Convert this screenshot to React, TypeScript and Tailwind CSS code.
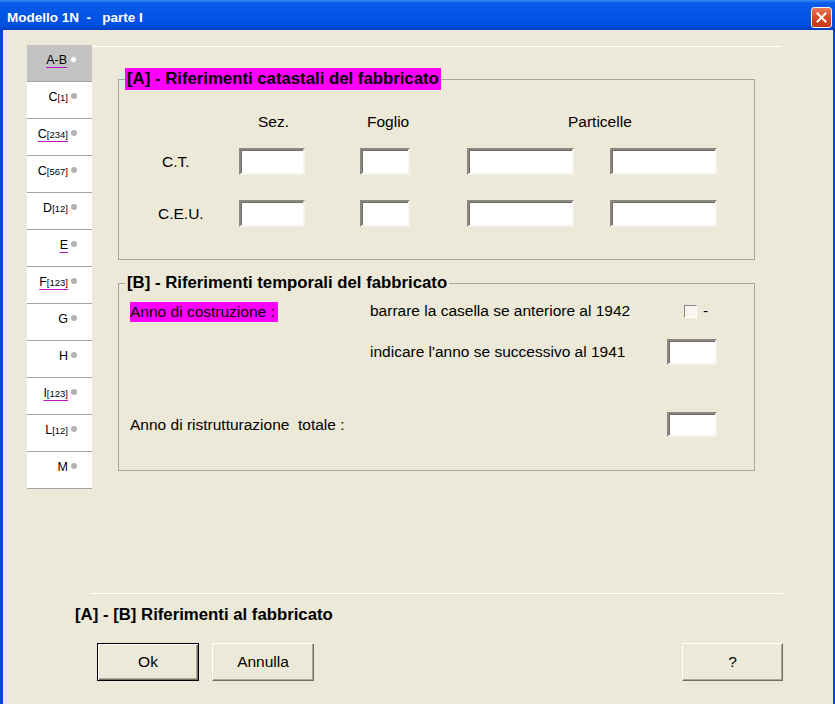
import type { ReactNode } from 'react';

const tabs: { main: string; sub?: string; underline?: boolean; active?: boolean }[] = [
  { main: 'A-B', underline: true, active: true },
  { main: 'C', sub: '[1]' },
  { main: 'C', sub: '[234]', underline: true },
  { main: 'C', sub: '[567]' },
  { main: 'D', sub: '[12]' },
  { main: 'E', underline: true },
  { main: 'F', sub: '[123]', underline: true },
  { main: 'G' },
  { main: 'H' },
  { main: 'I', sub: '[123]', underline: true },
  { main: 'L', sub: '[12]' },
  { main: 'M' },
];

function Field({ className = '' }: { className?: string }) {
  return (
    <input
      type="text"
      readOnly
      className={`block bg-white border-2 border-t-[#8a8880] border-l-[#8a8880] border-r-[#f4f3ee] border-b-[#f4f3ee] shadow-[inset_1px_1px_0_#6e6d67] outline-none ${className}`}
    />
  );
}

function WinButton({ children, primary = false, className = '' }: { children: ReactNode; primary?: boolean; className?: string }) {
  return (
    <button
      className={`h-[38px] text-[15.5px] text-black bg-[#ECE9D8] ${
        primary
          ? 'border border-black shadow-[inset_1px_1px_0_#ffffff,inset_-1px_-1px_0_#716f64,inset_-2px_-2px_0_#aca899]'
          : 'border border-t-white border-l-white border-r-[#716f64] border-b-[#716f64] shadow-[inset_-1px_-1px_0_#aca899]'
      } ${className}`}
    >
      {children}
    </button>
  );
}

export default function App() {
  return (
    <div className="w-[835px] h-[704px] flex flex-col overflow-hidden font-['Liberation_Sans',Arial,sans-serif] text-black">
      {/* Title bar */}
      <div className="h-[30px] shrink-0 flex justify-between bg-[linear-gradient(to_bottom,#3c8cf8_0%,#0a5ce8_10%,#0256e6_45%,#0050e0_85%,#003cc0_100%)]">
        <div className="pl-[7px] pt-[10px] leading-[16px] text-[13.5px] font-bold text-white whitespace-pre">
          Modello 1N  -   parte I
        </div>
        <div className="mt-[7px] mr-[3px] w-[21px] h-[21px] rounded-[3px] border border-[#f2f2f2] bg-[linear-gradient(to_bottom,#e9795a,#d7461f_55%,#c2391a)] flex items-center justify-center">
          <svg width="11" height="11" viewBox="0 0 11 11">
            <path d="M1.5 1.5 L9.5 9.5 M9.5 1.5 L1.5 9.5" stroke="white" strokeWidth="2" strokeLinecap="square" />
          </svg>
        </div>
      </div>

      {/* Body */}
      <div className="flex-1 flex flex-col bg-[#ECE9D8] border-l-[3px] border-r-[2px] border-[#0843dc]">
        <div className="flex pt-[15px]">
          {/* Tabs */}
          <div className="ml-[24px] w-[65px] shrink-0 flex flex-col">
            {tabs.map((t, i) => (
              <div
                key={i}
                className={`h-[37px] border-b border-[#a3a3a3] flex justify-end pt-[8px] pr-[15px] ${t.active ? 'bg-[#c3c3c3]' : 'bg-white'}`}
              >
                <div className="h-[14px] flex items-center">
                  <span
                    className={`leading-[14px] text-[12.5px] ${t.underline ? 'underline decoration-[#c012c0] underline-offset-[3px]' : ''}`}
                  >
                    {t.main}
                    {t.sub && <span className="text-[9.5px]">{t.sub}</span>}
                  </span>
                  <span
                    className={`ml-[3px] -mt-[2px] rounded-full ${
                      t.active ? 'bg-white border border-[#c8c8c8] w-[7px] h-[7px]' : 'bg-[#b2b2b2] w-[6px] h-[6px]'
                    }`}
                  />
                </div>
              </div>
            ))}
          </div>

          {/* Right column */}
          <div className="flex-1 flex flex-col">
            <div className="mt-[1px] h-px w-[690px] bg-white" />

            {/* [A] */}
            <fieldset className="ml-[26px] mt-[21px] w-[637px] border border-[#a8a79c]">
              <legend className="ml-[6px] px-[2px] bg-[#ff00ff] leading-[22px] text-[16.75px] font-bold">
                [A] - Riferimenti catastali del fabbricato
              </legend>
              <div className="mt-[23px] h-[18px] flex leading-[18px] text-[15.5px]">
                <span className="ml-[139px] w-[109px]">Sez.</span>
                <span className="w-[201px]">Foglio</span>
                <span>Particelle</span>
              </div>
              <div className="mt-[17px] flex items-center h-[27px]">
                <span className="w-[120px] pl-[43px] text-[15.5px]">C.T.</span>
                <Field className="w-[66px] h-[27px]" />
                <Field className="ml-[55px] w-[50px] h-[27px]" />
                <Field className="ml-[57px] w-[107px] h-[27px]" />
                <Field className="ml-[36px] w-[107px] h-[27px]" />
              </div>
              <div className="mt-[25px] mb-[32px] flex items-center h-[27px]">
                <span className="w-[120px] pl-[39px] text-[15.5px]">C.E.U.</span>
                <Field className="w-[66px] h-[27px]" />
                <Field className="ml-[55px] w-[50px] h-[27px]" />
                <Field className="ml-[57px] w-[107px] h-[27px]" />
                <Field className="ml-[36px] w-[107px] h-[27px]" />
              </div>
            </fieldset>

            {/* [B] */}
            <fieldset className="ml-[26px] mt-[12px] w-[637px] border border-[#a8a79c]">
              <legend className="ml-[6px] px-[2px] leading-[22px] text-[16.75px] font-bold">
                [B] - Riferimenti temporali del fabbricato
              </legend>
              <div className="pl-[11px] pt-[6px] pb-[33px] grid grid-cols-[240px_297px_50px] text-[15.5px]">
                <div className="h-[22px]">
                  <span className="inline-block h-[20px] leading-[20px] pr-[3px] bg-[#ff00ff]">Anno di costruzione :</span>
                </div>
                <div className="h-[22px] leading-[22px]">barrare la casella se anteriore al 1942</div>
                <div className="h-[22px] flex items-center">
                  <span className="ml-[17px] w-[13px] h-[13px] bg-[#f6f5f0] border border-t-[#8a8880] border-l-[#8a8880] border-r-white border-b-white" />
                  <span className="ml-[6px] leading-[22px]">-</span>
                </div>

                <div className="mt-[17px]" />
                <div className="mt-[17px] h-[26px] flex items-center">indicare l'anno se successivo al 1941</div>
                <div className="mt-[17px]">
                  <Field className="w-[50px] h-[26px]" />
                </div>

                <div className="col-span-2 mt-[47px] h-[25px] flex items-center whitespace-pre">Anno di ristrutturazione  totale :</div>
                <div className="mt-[47px]">
                  <Field className="w-[50px] h-[25px]" />
                </div>
              </div>
            </fieldset>
          </div>
        </div>

        {/* Bottom */}
        <div className="mt-[104px] ml-[87px] w-[693px] h-px bg-white" />
        <div className="mt-[10px] ml-[72px] leading-[22px] text-[16.75px] font-bold">
          [A] - [B] Riferimenti al fabbricato
        </div>
        <div className="mt-[17px] flex">
          <WinButton primary className="ml-[94px] w-[102px]">Ok</WinButton>
          <WinButton className="ml-[13px] w-[102px]">Annulla</WinButton>
          <WinButton className="ml-auto mr-[50px] w-[101px]">?</WinButton>
        </div>
      </div>
    </div>
  );
}
